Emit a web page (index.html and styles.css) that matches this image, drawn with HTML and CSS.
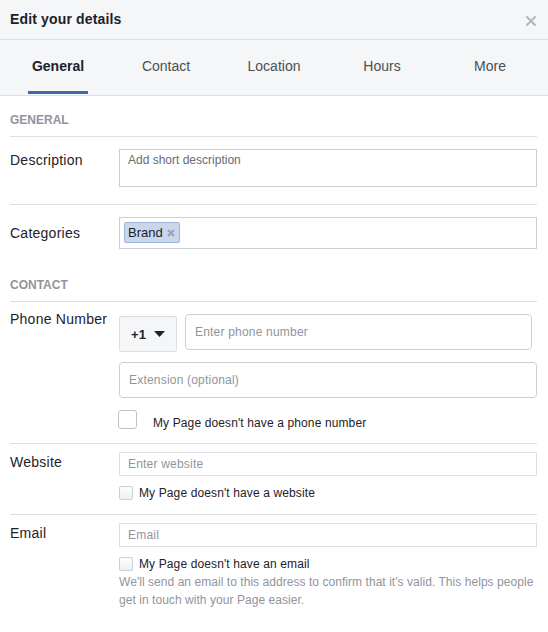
FILE: index.html
```
<!DOCTYPE html>
<html lang="en">
<head>
<meta charset="utf-8">
<title>Edit your details</title>
<link rel="stylesheet" href="styles.css">
</head>
<body>
<div class="dialog">
  <header class="dlg-head">
    <h1 class="dlg-title">Edit your details</h1>
    <span class="dlg-close" aria-label="Close">
      <svg width="10" height="10" viewBox="0 0 10 10"><path d="M1 1L9 9M9 1L1 9" stroke="#b4b7bd" stroke-width="2" stroke-linecap="square"/></svg>
    </span>
  </header>
  <nav class="tabs">
    <a class="tab is-active"><span class="tab-label">General</span></a>
    <a class="tab"><span class="tab-label">Contact</span></a>
    <a class="tab"><span class="tab-label">Location</span></a>
    <a class="tab"><span class="tab-label">Hours</span></a>
    <a class="tab"><span class="tab-label">More</span></a>
  </nav>
  <div class="dlg-body">
    <div class="section-title">General</div>

    <div class="row row-desc">
      <div class="lbl lbl-desc">Description</div>
      <div class="ctl">
        <div class="field field-area">Add short description</div>
      </div>
    </div>

    <div class="row row-cat">
      <div class="lbl lbl-cat">Categories</div>
      <div class="ctl">
        <div class="field field-tokens">
          <span class="token">Brand<svg class="token-x" width="8" height="8" viewBox="0 0 8 8"><path d="M1 1L7 7M7 1L1 7" stroke="#96a3b8" stroke-width="2"/></svg></span>
        </div>
      </div>
    </div>

    <div class="section-title">Contact</div>

    <div class="row row-phone">
      <div class="lbl lbl-phone">Phone Number</div>
      <div class="ctl">
        <div class="phone-line">
          <div class="country">+1<svg class="caret" width="11" height="6" viewBox="0 0 11 6"><path d="M0 0H11L5.5 6Z" fill="#1d2129"/></svg></div>
          <div class="field field-round field-phone">Enter phone number</div>
        </div>
        <div class="field field-round field-ext">Extension (optional)</div>
        <label class="check check-lg"><span class="box box-lg"></span><span class="check-text">My Page doesn't have a phone number</span></label>
      </div>
    </div>

    <div class="row row-web">
      <div class="lbl lbl-small">Website</div>
      <div class="ctl">
        <div class="field field-flat">Enter website</div>
        <label class="check check-sm"><span class="box box-sm"></span><span class="check-text">My Page doesn't have a website</span></label>
      </div>
    </div>

    <div class="row row-email">
      <div class="lbl lbl-small">Email</div>
      <div class="ctl">
        <div class="field field-flat">Email</div>
        <label class="check check-sm"><span class="box box-sm"></span><span class="check-text">My Page doesn't have an email</span></label>
        <p class="help">We'll send an email to this address to confirm that it's valid. This helps people get in touch with your Page easier.</p>
      </div>
    </div>
  </div>
</div>
</body>
</html>
```
FILE: styles.css
```
* { box-sizing: border-box; }
html, body { margin: 0; padding: 0; background: #fff; }
body {
  font-family: "Liberation Sans", Arial, Helvetica, sans-serif;
  color: #1d2129;
  width: 548px;
}
.dialog { width: 548px; }

.dlg-head {
  height: 40px;
  background: #f5f6f7;
  border-bottom: 1px solid #dddfe2;
  display: flex;
  align-items: center;
  justify-content: space-between;
  padding: 0 12px 0 10px;
}
.dlg-title {
  margin: 0;
  font-size: 14px;
  font-weight: bold;
  line-height: 39px;
  letter-spacing: 0.15px;
  color: #1d2129;
}
.dlg-close { display: flex; margin-top: 2px; }

.tabs {
  display: flex;
  height: 56px;
  padding: 0 4px;
  background: #f5f6f7;
  border-bottom: 1px solid #dddfe2;
}
.tab {
  flex: 1;
  text-align: center;
  padding-top: 17px;
  font-size: 14px;
  line-height: 18px;
  color: #4b4f56;
}
.tab-label {
  display: inline-block;
  padding: 0 4px 16px;
  border-bottom: 3px solid transparent;
}
.tab.is-active { color: #1d2129; font-weight: bold; }
.tab.is-active .tab-label { border-bottom-color: #4267b2; }

.dlg-body { padding: 0 11px 0 10px; }

.section-title {
  padding: 16px 0 8px;
  font-size: 12px;
  line-height: 16px;
  font-weight: bold;
  color: #90949c;
  text-transform: uppercase;
  border-bottom: 1px solid #dddfe2;
}

.row {
  display: grid;
  grid-template-columns: 109px 1fr;
  align-items: start;
}
.row-desc { padding: 12px 0 17px; border-bottom: 1px solid #dddfe2; }
.row-cat { padding: 12px 0 12px; }
.row-phone { padding: 12px 0 13px; border-bottom: 1px solid #dddfe2; }
.row-web { padding: 8px 0 14px; border-bottom: 1px solid #dddfe2; }
.row-email { padding: 8px 0 10px; }

.lbl { font-size: 14px; line-height: 18px; letter-spacing: 0.25px; color: #1d2129; }
.lbl-desc { padding-top: 2px; }
.lbl-cat { padding-top: 7px; }
.lbl-phone { margin-top: -4px; }
.lbl-small { padding-top: 1px; }

.ctl { display: flex; flex-direction: column; min-width: 0; }

.field {
  font-size: 12px;
  line-height: 16px;
  letter-spacing: 0.2px;
  color: #90949c;
  background: #fff;
  border: 1px solid #ccd0d5;
}
.field-area {
  height: 38px;
  padding: 2px 8px;
  letter-spacing: 0;
  color: #686c73;
}
.field-tokens {
  height: 32px;
  padding: 4px;
  display: flex;
  align-items: flex-start;
}
.token {
  display: inline-flex;
  align-items: center;
  height: 21px;
  padding: 0 4px 0 3px;
  background: #cad6eb;
  border: 1px solid #9cb4d8;
  border-radius: 2px;
  font-size: 13px;
  line-height: 19px;
  letter-spacing: 0;
  color: #1d2129;
}
.token-x { margin-left: 4px; }

.phone-line {
  display: flex;
  align-items: flex-start;
  gap: 8px;
  margin-right: 5px;
  margin-bottom: 10px;
}
.country {
  width: 58px;
  height: 36px;
  margin-top: 2px;
  display: flex;
  align-items: center;
  justify-content: center;
  gap: 8px;
  background: #f5f6f7;
  border: 1px solid #dddfe2;
  border-radius: 2px;
  font-size: 13px;
  font-weight: bold;
  color: #1d2129;
}
.caret { display: block; }

.field-round {
  height: 36px;
  border-radius: 4px;
  display: flex;
  align-items: center;
  padding: 0 9px;
}
.field-phone { flex: 1; }
.field-ext { margin-bottom: 12px; }

.field-flat {
  height: 24px;
  border-color: #dddfe2;
  display: flex;
  align-items: center;
  padding: 0 8px;
  margin-bottom: 10px;
}

.check {
  display: flex;
  font-size: 12px;
  line-height: 14px;
  letter-spacing: 0.12px;
  color: #1d2129;
}
.box {
  display: inline-block;
  flex: none;
  background: #fff;
  border: 1px solid #bec3c9;
}
.check-lg { align-items: flex-start; margin-left: -1px; }
.box-lg { width: 19px; height: 19px; border-radius: 3px; }
.check-lg .check-text { margin: 6px 0 0 16px; }

.check-sm { align-items: center; }
.box-sm {
  width: 14px;
  height: 14px;
  border-radius: 2px;
  border-color: #ccd0d5;
  background: linear-gradient(#fdfdfd, #eef0f2);
}
.check-sm .check-text { margin-left: 6px; }

.help {
  margin: 2px 0 0;
  font-size: 12px;
  line-height: 18px;
  letter-spacing: 0.05px;
  color: #90949c;
}
```
